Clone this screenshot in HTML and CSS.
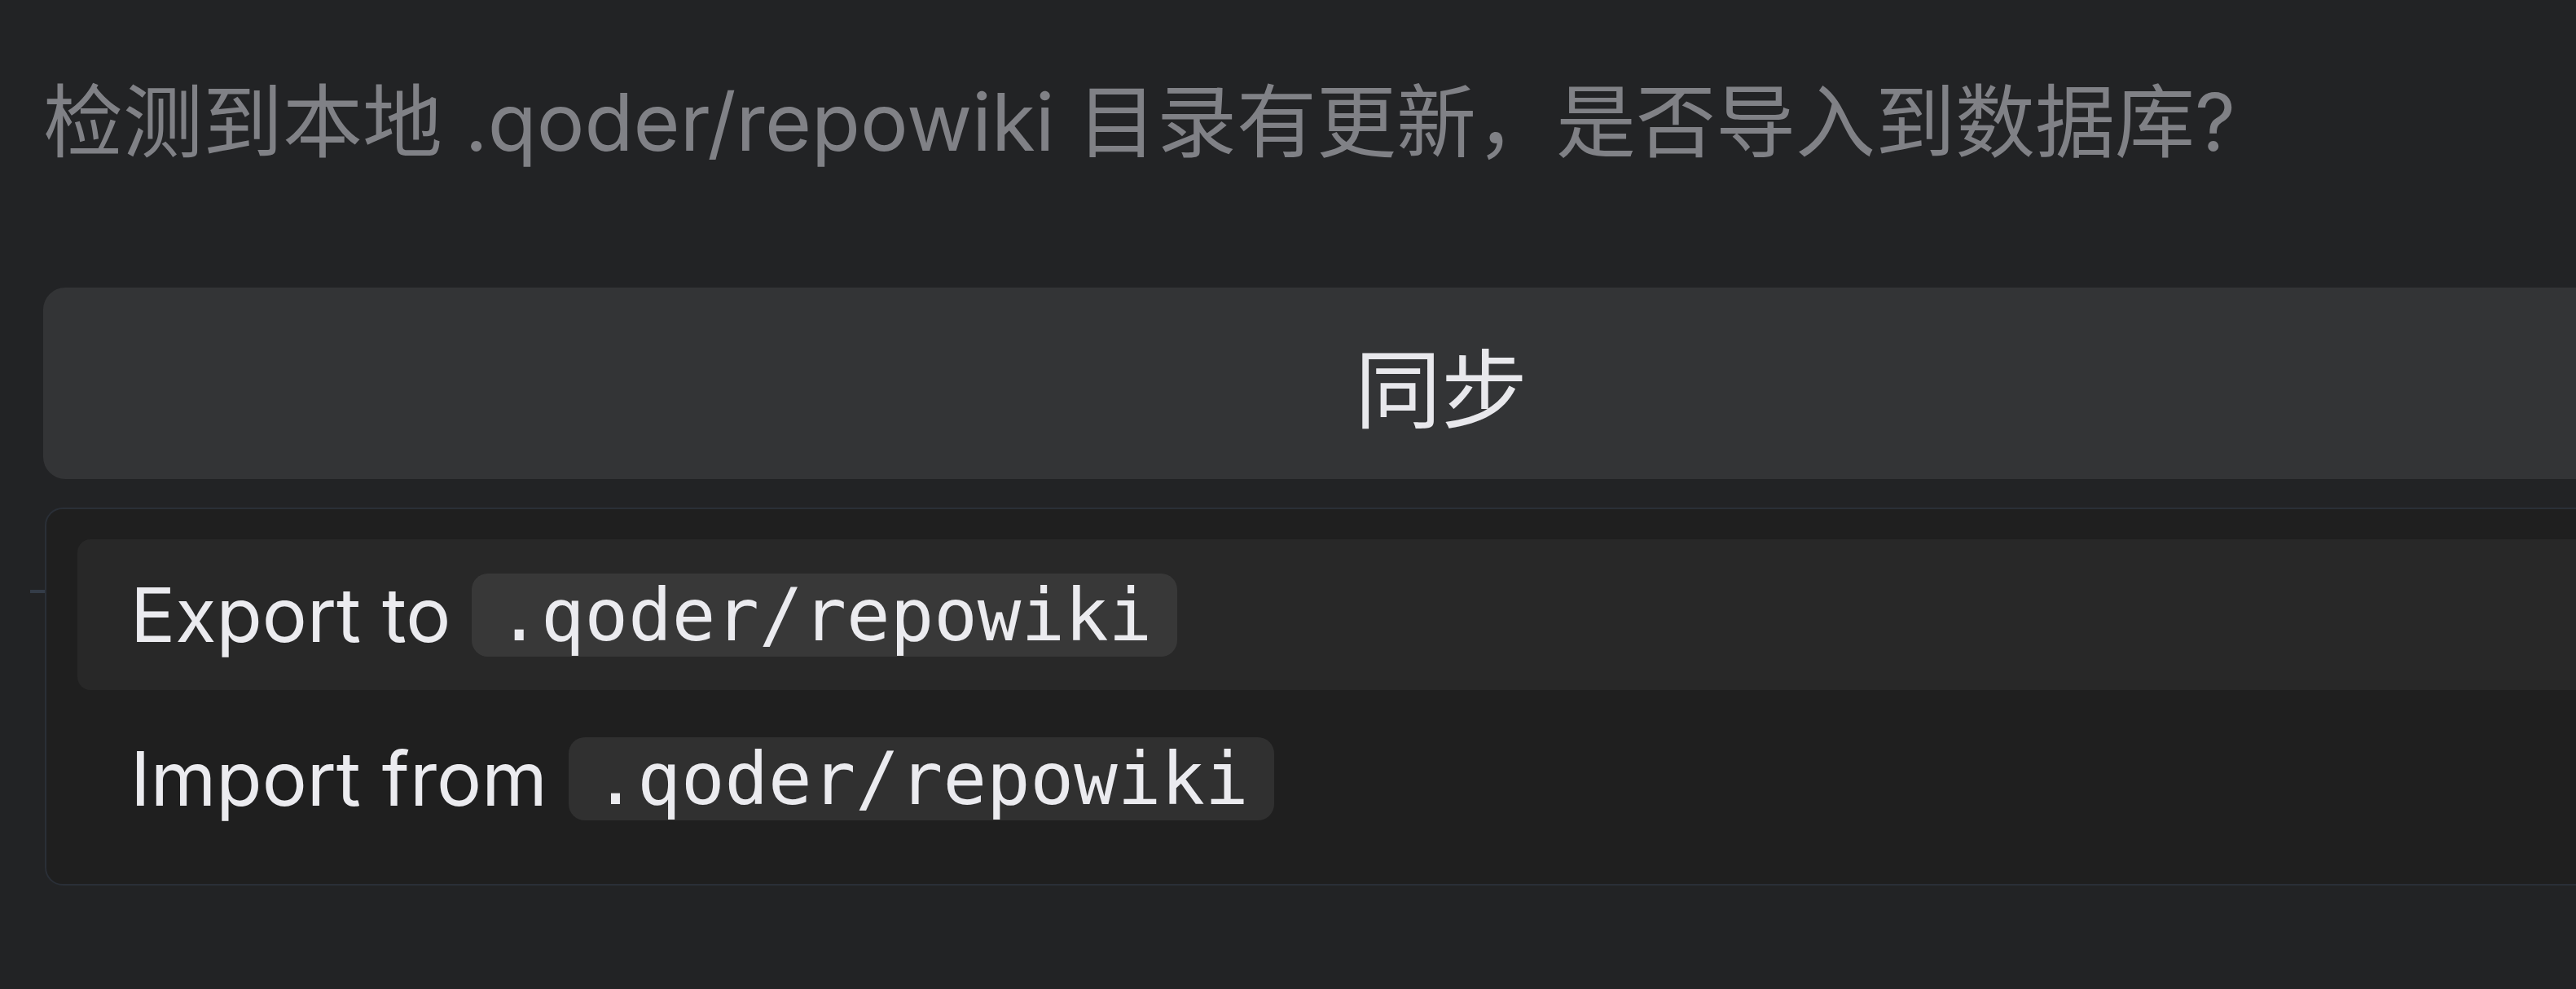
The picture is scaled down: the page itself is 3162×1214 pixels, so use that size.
FILE: index.html
```html
<!DOCTYPE html>
<html lang="zh-CN">
<head>
    <meta charset="UTF-8">
    <title>Repowiki 同步</title>
    <link rel="stylesheet" href="styles.css">
</head>
<body>
    <div class="page">
        <p class="notice">检测到本地 .qoder/repowiki 目录有更新，是否导入到数据库?</p>
        <div class="panel">
            <button class="sync-btn" type="button">同步</button>
            <div class="menu">
                <div class="menu-item active">
                    <span class="label">Export to</span>
                    <code>.qoder/repowiki</code>
                </div>
                <div class="menu-item">
                    <span class="label">Import from</span>
                    <code>.qoder/repowiki</code>
                </div>
            </div>
        </div>
    </div>
</body>
</html>
```

FILE: styles.css
```css
html, body {
    background-color: #222325;
}
body {
    margin: 0;
    overflow: hidden;
    font-family: Inter, "Noto Sans CJK SC", sans-serif;
}
.page {
    padding: 80px 0 0 53px;
}
.notice {
    margin: 0;
    font-size: 98px;
    line-height: 140px;
    color: #808186;
    white-space: nowrap;
}
.panel {
    width: 3432px;
    margin-top: 133px;
}
.sync-btn {
    display: block;
    width: 100%;
    height: 235px;
    background-color: #333436;
    border: none;
    border-radius: 27px;
    color: #e8e8ec;
    font-family: "Noto Sans CJK SC", sans-serif;
    font-size: 106px;
    cursor: pointer;
}
.menu {
    position: relative;
    margin: 35px 0 0 2px;
    padding: 37px 38px;
    border: 2px solid #2a2f37;
    border-radius: 22px;
    background-color: #1f1f1f;
    display: flex;
    flex-direction: column;
    gap: 16px;
}
.menu::before {
    content: "";
    position: absolute;
    left: -20px;
    top: 99px;
    width: 18px;
    height: 4px;
    background-color: #343c48;
}
.menu-item {
    height: 185px;
    padding-left: 65px;
    border-radius: 16px;
    display: flex;
    align-items: center;
    gap: 26px;
    color: #ebebef;
    font-size: 92px;
}
.menu-item.active {
    background-color: #282828;
}
code {
    font-family: "DejaVu Sans Mono", monospace;
    font-size: 89px;
    line-height: 102px;
    height: 102px;
    padding: 0 31px;
    border-radius: 20px;
    background-color: rgba(255, 255, 255, 0.08);
    color: #ebebef;
}
```
